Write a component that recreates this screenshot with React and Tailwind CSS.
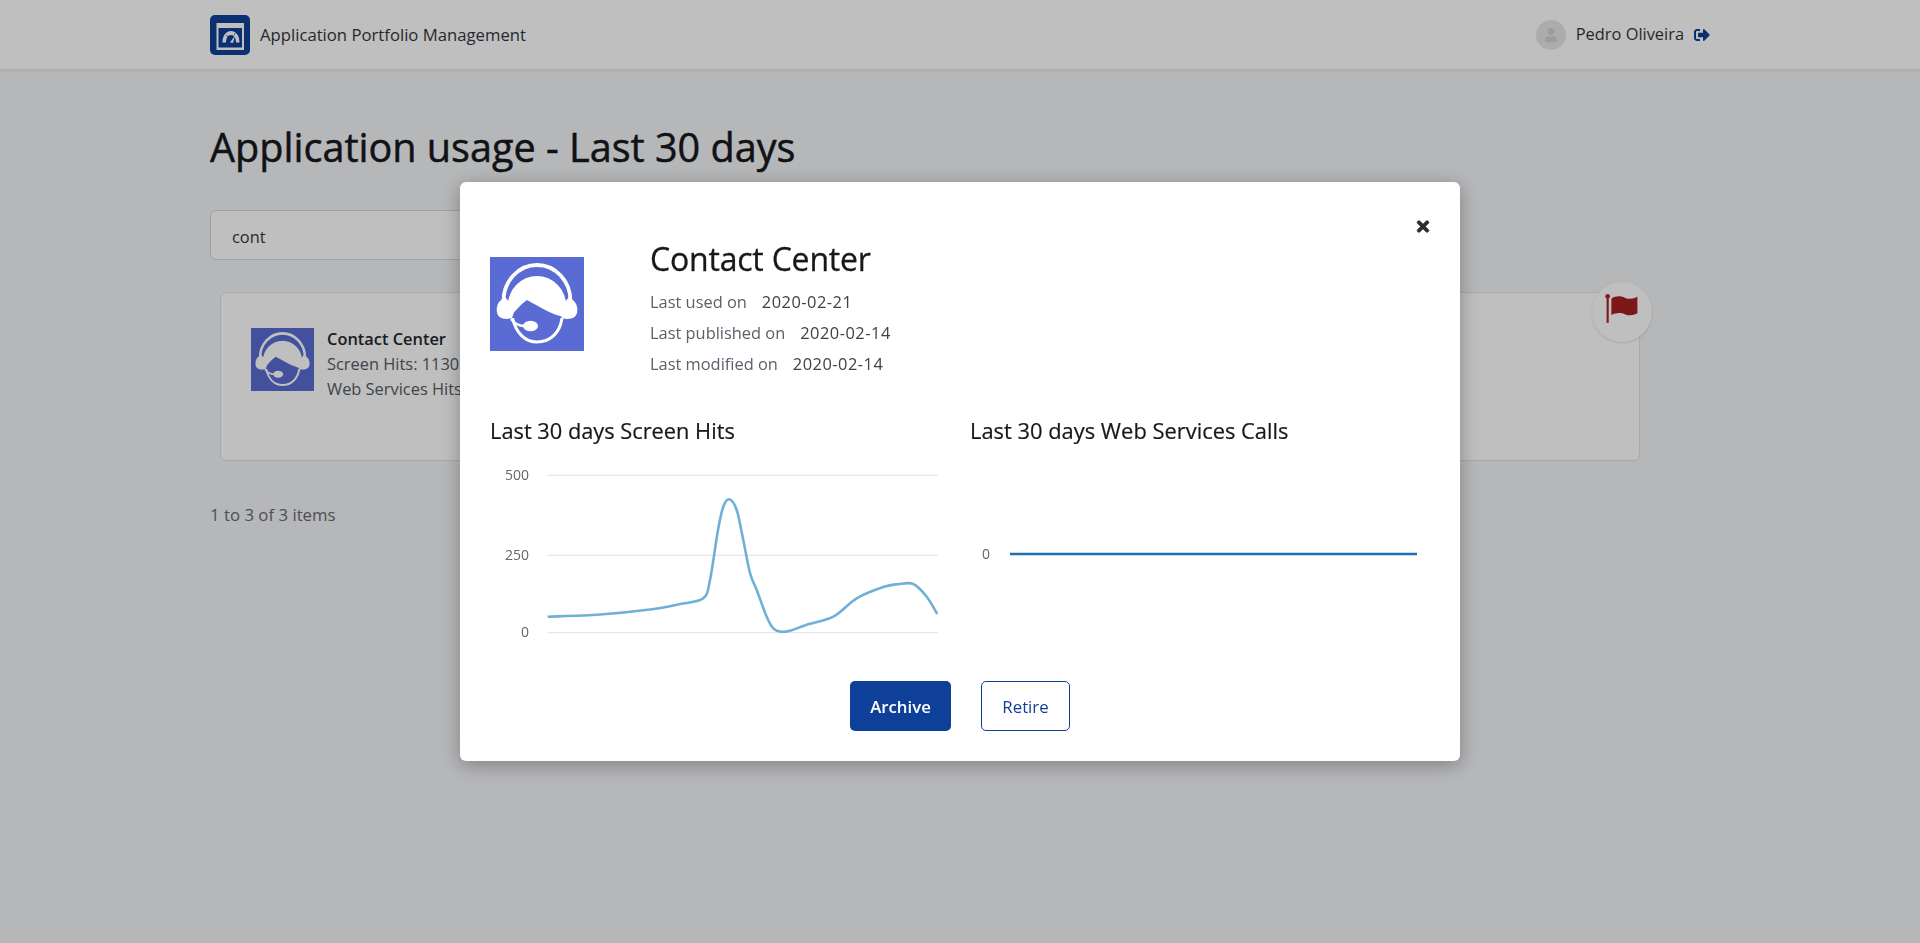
import React from 'react';
import { FaSignOutAlt, FaTimes, FaUser } from 'react-icons/fa';

const FONT = "font-['Open_Sans',sans-serif]";

const screenHits = [
  [57.7, 151.7], [110, 149.5], [160, 144.5], [190, 139], [213.3, 133.3], [220, 115], [228, 65], [233.3, 41.7],
  [239.3, 34.3], [246.7, 45], [253.3, 75], [260, 108], [266.7, 125], [276.7, 151.7], [283.3, 163.3], [291, 166.7],
  [300, 165.7], [316.7, 159.7], [343.3, 151.7], [366.7, 133.3], [393.3, 122], [408, 119.2], [423.3, 119],
  [436.7, 131.7], [447.3, 149],
];

// smooth line through the points (catmull-rom to bezier)
const smoothPath = (pts) => {
  let d = `M${pts[0][0]} ${pts[0][1]}`;
  for (let i = 0; i < pts.length - 1; i++) {
    const p0 = pts[i - 1] || pts[i];
    const p1 = pts[i];
    const p2 = pts[i + 1];
    const p3 = pts[i + 2] || p2;
    const c1x = p1[0] + (p2[0] - p0[0]) / 6;
    const c1y = p1[1] + (p2[1] - p0[1]) / 6;
    const c2x = p2[0] - (p3[0] - p1[0]) / 6;
    const c2y = p2[1] - (p3[1] - p1[1]) / 6;
    d += ` C${c1x} ${c1y} ${c2x} ${c2y} ${p2[0]} ${p2[1]}`;
  }
  return d;
};

const HeadsetLogo = ({ className }) => (
  <svg viewBox="0 0 94 94" className={className}>
    <rect width="94" height="94" fill="#5a6bd3" />
    <path d="M13.5 44A33.5 36 0 0 1 80.5 44" fill="none" stroke="#fff" strokeWidth="3.8" />
    <path d="M17.5 50A29.5 31 0 0 1 76.5 50L76 60.5C62 58 50 50 37 43C31 47 26 53 22 58Z" fill="#fff" />
    <path d="M15 40L10 44C6 48 5.5 56 9 59.5C13 62.5 18 62.5 22 61L25 52Z" fill="#fff" />
    <path d="M79 40L84 44C88 48 88.5 56 85 59.5C81 62.5 76 62.5 72 61L69 52Z" fill="#fff" />
    <path d="M22.5 61C26 76 35 85 47 85C60 85 70 76 72 61" fill="none" stroke="#fff" strokeWidth="3" />
    <path d="M21 62C24 66 28 69 34 69" fill="none" stroke="#fff" strokeWidth="2.4" />
    <ellipse cx="40.5" cy="69" rx="7.5" ry="5.2" fill="#fff" />
  </svg>
);

const AppLogo = () => (
  <svg viewBox="0 0 40 40" className="w-10 h-10 shrink-0">
    <rect width="40" height="40" rx="5" fill="#0f4099" />
    <rect x="6.5" y="8" width="27.5" height="27" fill="#fff" />
    <rect x="8.5" y="13" width="23.5" height="19.5" fill="#0f4099" />
    <path d="M12.5 27.5C12.5 20 16.5 16 21 16S29.5 20 29.5 27.5H26C26 23 24 20 21 20S16 23 16 27.5Z" fill="#fff" />
    <path d="M20 27.5L25 20.5L23 28Z" fill="#fff" />
    <path d="M16.5 20L18.5 22.5M25 18.5L24 20" stroke="#0f4099" strokeWidth="0.8" />
  </svg>
);

const FlagIcon = () => (
  <svg viewBox="0 0 32 28" className="w-[34px] h-[30px] mb-[8px]">
    <circle cx="2.5" cy="3" r="2.2" fill="#a82020" />
    <rect x="1.5" y="3" width="2" height="25" fill="#a82020" />
    <path d="M6 5C10 2.5 15 2.5 19 4.5C23 6 27 5.5 30.5 3.5V19C27 21 23 21.5 19 20C15 18 10 18.5 6 20.5Z" fill="#a82020" />
  </svg>
);

const AppCard = () => (
  <div className="relative ml-[10px] w-[1420px] h-[169px] mt-8 bg-white border border-[#dde3e9] rounded-md flex pl-[30px] pt-[35px]">
    <HeadsetLogo className="w-[63px] h-[63px] shrink-0" />
    <div className="ml-[13px] -mt-[2px] text-[16.4px] leading-[25px] text-[#555b63]">
      <div className="font-semibold text-[#24272c]">Contact Center</div>
      <div>Screen Hits: 1130</div>
      <div>Web Services Hits: 0</div>
    </div>
    <div className="absolute -top-[11px] -right-[13px] w-[60px] h-[60px] rounded-full bg-white shadow flex items-center justify-center">
      <FlagIcon />
    </div>
  </div>
);

const ModalInfoRow = ({ label, value }) => (
  <div className="h-[31px] leading-[31px] text-[16.4px] text-[#5b616a]">
    {label}
    <span className="ml-[15px] tracking-[0.5px] text-[#3d4148]">{value}</span>
  </div>
);

const ScreenHitsChart = () => (
  <svg viewBox="0 0 450 180" className="w-[450px] h-[180px] mt-[21px]">
    {[10.3, 90.3, 167.7].map((y) => (
      <line key={y} x1="57.7" x2="447.7" y1={y} y2={y} stroke="#e6e6e6" strokeWidth="1.2" />
    ))}
    <g fontSize="14" fill="#666" textAnchor="end" fontFamily="Open Sans, sans-serif">
      <text x="39" y="15">500</text>
      <text x="39" y="95">250</text>
      <text x="39" y="172">0</text>
    </g>
    <path d={smoothPath(screenHits)} fill="none" stroke="#6fb1d6" strokeWidth="2.6" />
  </svg>
);

const WebServicesChart = () => (
  <svg viewBox="0 0 450 180" className="w-[450px] h-[180px] mt-[21px]">
    <text x="20" y="94" fontSize="14" fill="#666" textAnchor="end" fontFamily="Open Sans, sans-serif">0</text>
    <line x1="40" x2="447" y1="89" y2="89" stroke="#1f6fb4" strokeWidth="2.6" />
  </svg>
);

const Modal = () => (
  <div className="fixed inset-0 bg-black/25 flex justify-center items-start pt-[182px]">
    <div className="relative w-[1000px] h-[579px] bg-white rounded-md shadow-[0_4px_20px_rgba(0,0,0,0.3)] pt-[58px] px-[30px]">
      <button className="absolute top-[36px] right-[29px] text-[#2a2d33]">
        <FaTimes className="w-[16px] h-[17px]" stroke="currentColor" strokeWidth={25} />
      </button>
      <div className="flex">
        <HeadsetLogo className="w-[94px] h-[94px] mt-[17px] shrink-0" />
        <div className="ml-[66px]">
          <h2 className="text-[32px] leading-10 tracking-[-0.2px] text-[#16181b] font-normal -mt-[1px] [-webkit-text-stroke:0.3px]">Contact Center</h2>
          <div className="mt-[7px]">
            <ModalInfoRow label="Last used on" value="2020-02-21" />
            <ModalInfoRow label="Last published on" value="2020-02-14" />
            <ModalInfoRow label="Last modified on" value="2020-02-14" />
          </div>
        </div>
      </div>
      <div className="flex gap-[30px] mt-[38px]">
        <div className="w-[450px]">
          <h3 className="text-[21.8px] leading-[27px] text-[#16181b] [-webkit-text-stroke:0.2px]">Last 30 days Screen Hits</h3>
          <ScreenHitsChart />
        </div>
        <div className="w-[450px]">
          <h3 className="text-[21.9px] leading-[27px] text-[#16181b] [-webkit-text-stroke:0.2px]">Last 30 days Web Services Calls</h3>
          <WebServicesChart />
        </div>
      </div>
      <div className="flex justify-center gap-[30px] mt-9">
        <button className="w-[101px] h-[50px] pt-[2px] rounded-[5px] bg-[#0f4099] text-white text-[16.8px] font-semibold">Archive</button>
        <button className="w-[89px] h-[50px] pt-[1px] rounded-[5px] bg-white border border-[#0f4099] text-[#0f4099] text-[16.8px]">Retire</button>
      </div>
    </div>
  </div>
);

export default function App() {
  return (
    <div className={`${FONT} min-h-screen bg-[#f3f4f7]`}>
      <header className="h-[70px] bg-white border-b border-[#e3e8ec] shadow-[0_1px_2px_rgba(0,0,0,0.05)]">
        <div className="w-[1500px] h-full mx-auto flex items-center justify-between">
          <div className="flex items-center gap-[10px]">
            <AppLogo />
            <span className="text-[16.7px] text-[#33363b]">Application Portfolio Management</span>
          </div>
          <div className="flex items-center">
            <div className="w-[30px] h-[30px] rounded-full bg-[#e6e6e6] flex items-center justify-center text-[#d0d0d0]">
              <FaUser className="w-[14px] h-[14px]" />
            </div>
            <span className="ml-[10px] text-[16.4px] text-[#33363b]">Pedro Oliveira</span>
            <FaSignOutAlt className="ml-[10px] w-4 h-4 text-[#0f4099]" />
          </div>
        </div>
      </header>
      <main className="w-[1500px] mx-auto">
        <h1 className="mt-[53px] text-[39.6px] leading-[48px] font-medium text-[#16181b] [-webkit-text-stroke:0.5px]">Application usage - Last 30 days</h1>
        <input
          readOnly
          value="cont"
          className="block mt-[39px] w-[600px] h-[50px] px-[21px] pt-[2px] text-[16.4px] text-[#33363b] bg-white border border-[#d3d8dd] rounded-md outline-none"
        />
        <AppCard />
        <p className="mt-[41px] text-[16.8px] text-[#666b72]">1 to 3 of 3 items</p>
      </main>
      <Modal />
    </div>
  );
}
